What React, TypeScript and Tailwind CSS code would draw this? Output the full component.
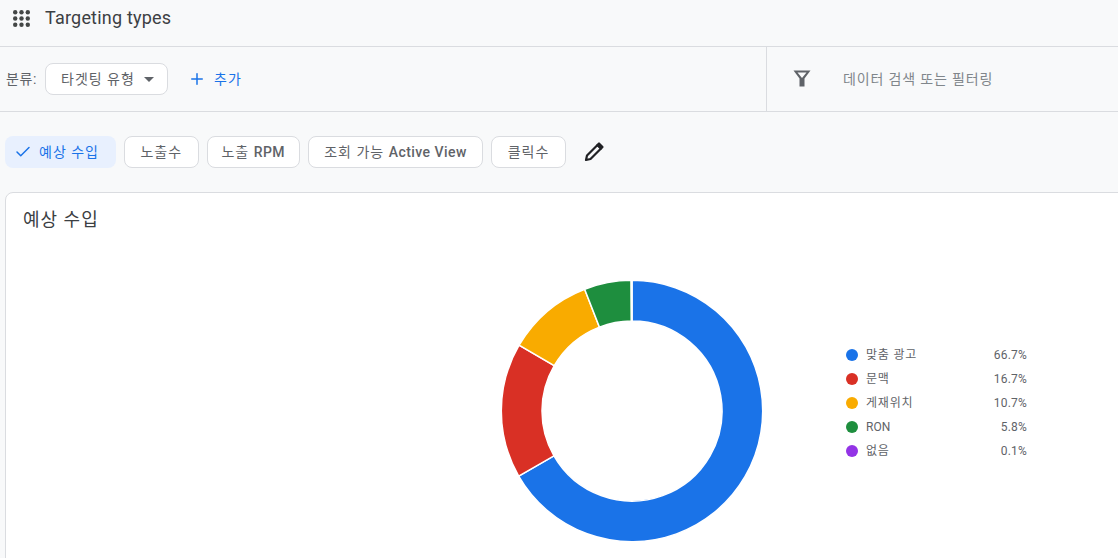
import { Check, Plus } from 'lucide-react';

const FONT = "font-['Roboto','Noto_Sans_CJK_KR',sans-serif]";

const CHIPS = [
  { ko: '노출수', en: '', width: 74.5 },
  { ko: '노출 ', en: 'RPM', width: 93.5 },
  { ko: '조회 가능 ', en: 'Active View', width: 175 },
  { ko: '클릭수', en: '', width: 75 },
];

const LEGEND = [
  { label: '맞춤 광고', value: 66.7, color: '#1a73e8' },
  { label: '문맥', value: 16.7, color: '#d93025' },
  { label: '게재위치', value: 10.7, color: '#f9ab00' },
  { label: 'RON', value: 5.8, color: '#1e8e3e' },
  { label: '없음', value: 0.1, color: '#9334e6' },
];

function polar(r: number, deg: number) {
  const a = ((deg - 90) * Math.PI) / 180;
  return `${(131 + r * Math.cos(a)).toFixed(2)} ${(131 + r * Math.sin(a)).toFixed(2)}`;
}

function Donut() {
  let start = 0;
  return (
    <svg width="262" height="262" viewBox="0 0 262 262" className="shrink-0">
      {LEGEND.map((s) => {
        const end = start + (s.value / 100) * 360;
        const large = end - start > 180 ? 1 : 0;
        const d = `M ${polar(130.7, start)} A 130.7 130.7 0 ${large} 1 ${polar(130.7, end)} L ${polar(90, end)} A 90 90 0 ${large} 0 ${polar(90, start)} Z`;
        start = end;
        return <path key={s.label} d={d} fill={s.color} stroke="#fff" strokeWidth="1.5" />;
      })}
    </svg>
  );
}

export default function App() {
  return (
    <main className={`${FONT} h-[558px] w-[1118px] overflow-hidden bg-[#f8f9fa] text-[#3c4043]`}>
      <header className="flex h-[47px] items-center border-b border-[#dadce0] pb-[10px] pl-[13px]">
        <svg width="17" height="17" viewBox="0 0 17 17" fill="#444746">
          {[2.200, 8.500, 14.800].map((y) =>
            [2.200, 8.500, 14.800].map((x) => <circle key={`${x}-${y}`} cx={x} cy={y} r="2.200" />)
          )}
        </svg>
        <h1 className="ml-[15px] text-[18px] leading-6 tracking-[0.2px] text-[#3c4043]">Targeting types</h1>
      </header>

      <section className="flex h-[65px] border-b border-[#dadce0]">
        <div className="flex w-[767px] items-center border-r border-[#dadce0] pl-[6px]">
          <span className="w-[39px] text-[14px] tracking-[0.6px] text-[#5f6368]">분류:</span>
          <button className="flex h-[32px] w-[123px] items-center rounded-lg border border-[#dadce0] bg-white pl-[15px] text-[14px] tracking-[1px] text-[#5f6368]">
            타겟팅 유형
            <span className="ml-[9px] h-0 w-0 border-x-[5px] border-t-[5px] border-x-transparent border-t-[#5f6368]" />
          </button>
          <button className="ml-[20px] flex items-center text-[14px] tracking-[1.2px] text-[#1a73e8]">
            <Plus size={18} strokeWidth={2} />
            <span className="ml-[8px]">추가</span>
          </button>
        </div>
        <div className="flex flex-1 items-center pl-[26px]">
          <svg width="18" height="17" viewBox="0 0 18 17" fill="#5f6368" className="mb-[2px]">
            <path fillRule="evenodd" d="M0.500 0.500H17.500L11.500 8.500V16.500H6.500V8.500ZM4.500 2.500H13.500L9 8Z" />
          </svg>
          <span className="ml-[32px] text-[14px] tracking-[0.85px] text-[#80868b]">데이터 검색 또는 필터링</span>
        </div>
      </section>

      <section className="flex h-[80px] items-center gap-[8px] pl-[5px]">
        <button className="flex h-[32px] w-[111px] items-center rounded-lg bg-[#e8f0fe] pl-[9px] text-[14px] tracking-[1px] text-[#1a73e8]">
          <Check size={18} strokeWidth={2} />
          <span className="ml-[7px]">예상 수입</span>
        </button>
        {CHIPS.map((c) => (
          <button
            key={c.ko}
            className="flex h-[32px] items-center justify-center whitespace-pre rounded-lg border border-[#dadce0] bg-white text-[14px] text-[#5f6368]"
            style={{ width: c.width }}
          >
            <span className="tracking-[1px]">{c.ko}</span>
            {c.en && <span className="font-medium tracking-[0.45px]">{c.en}</span>}
          </button>
        ))}
        <svg width="24" height="24" viewBox="0 0 24 24" className="ml-[8px]" fill="none" stroke="#202124" strokeWidth="2.200" strokeLinejoin="round">
          <path d="M4 20L5 15.500L15.500 5L19 8.500L8.500 19Z" />
          <path d="M15.500 5L17 3.500L20.500 7L19 8.500Z" fill="#202124" />
        </svg>
      </section>

      <section className="ml-[5px] h-[380px] w-[1130px] rounded-t-lg border border-[#dadce0] bg-white">
        <h2 className="pl-[17px] pt-[15px] text-[18px] leading-6 tracking-[1px] text-[#3c4043]">예상 수입</h2>
        <div className="flex pl-[495px] pt-[48px]">
          <Donut />
          <ul className="ml-[83px] mt-[63px] w-[181px]">
            {LEGEND.map((s) => (
              <li key={s.label} className="flex h-[24px] items-center text-[12px] text-[#5f6368]">
                <span className="h-[12px] w-[12px] rounded-full" style={{ background: s.color }} />
                <span className={s.label === 'RON' ? 'ml-[8px]' : 'ml-[8px] tracking-[0.8px]'}>{s.label}</span>
                <span className="ml-auto tracking-[0.2px]">{s.value}%</span>
              </li>
            ))}
          </ul>
        </div>
      </section>
    </main>
  );
}
